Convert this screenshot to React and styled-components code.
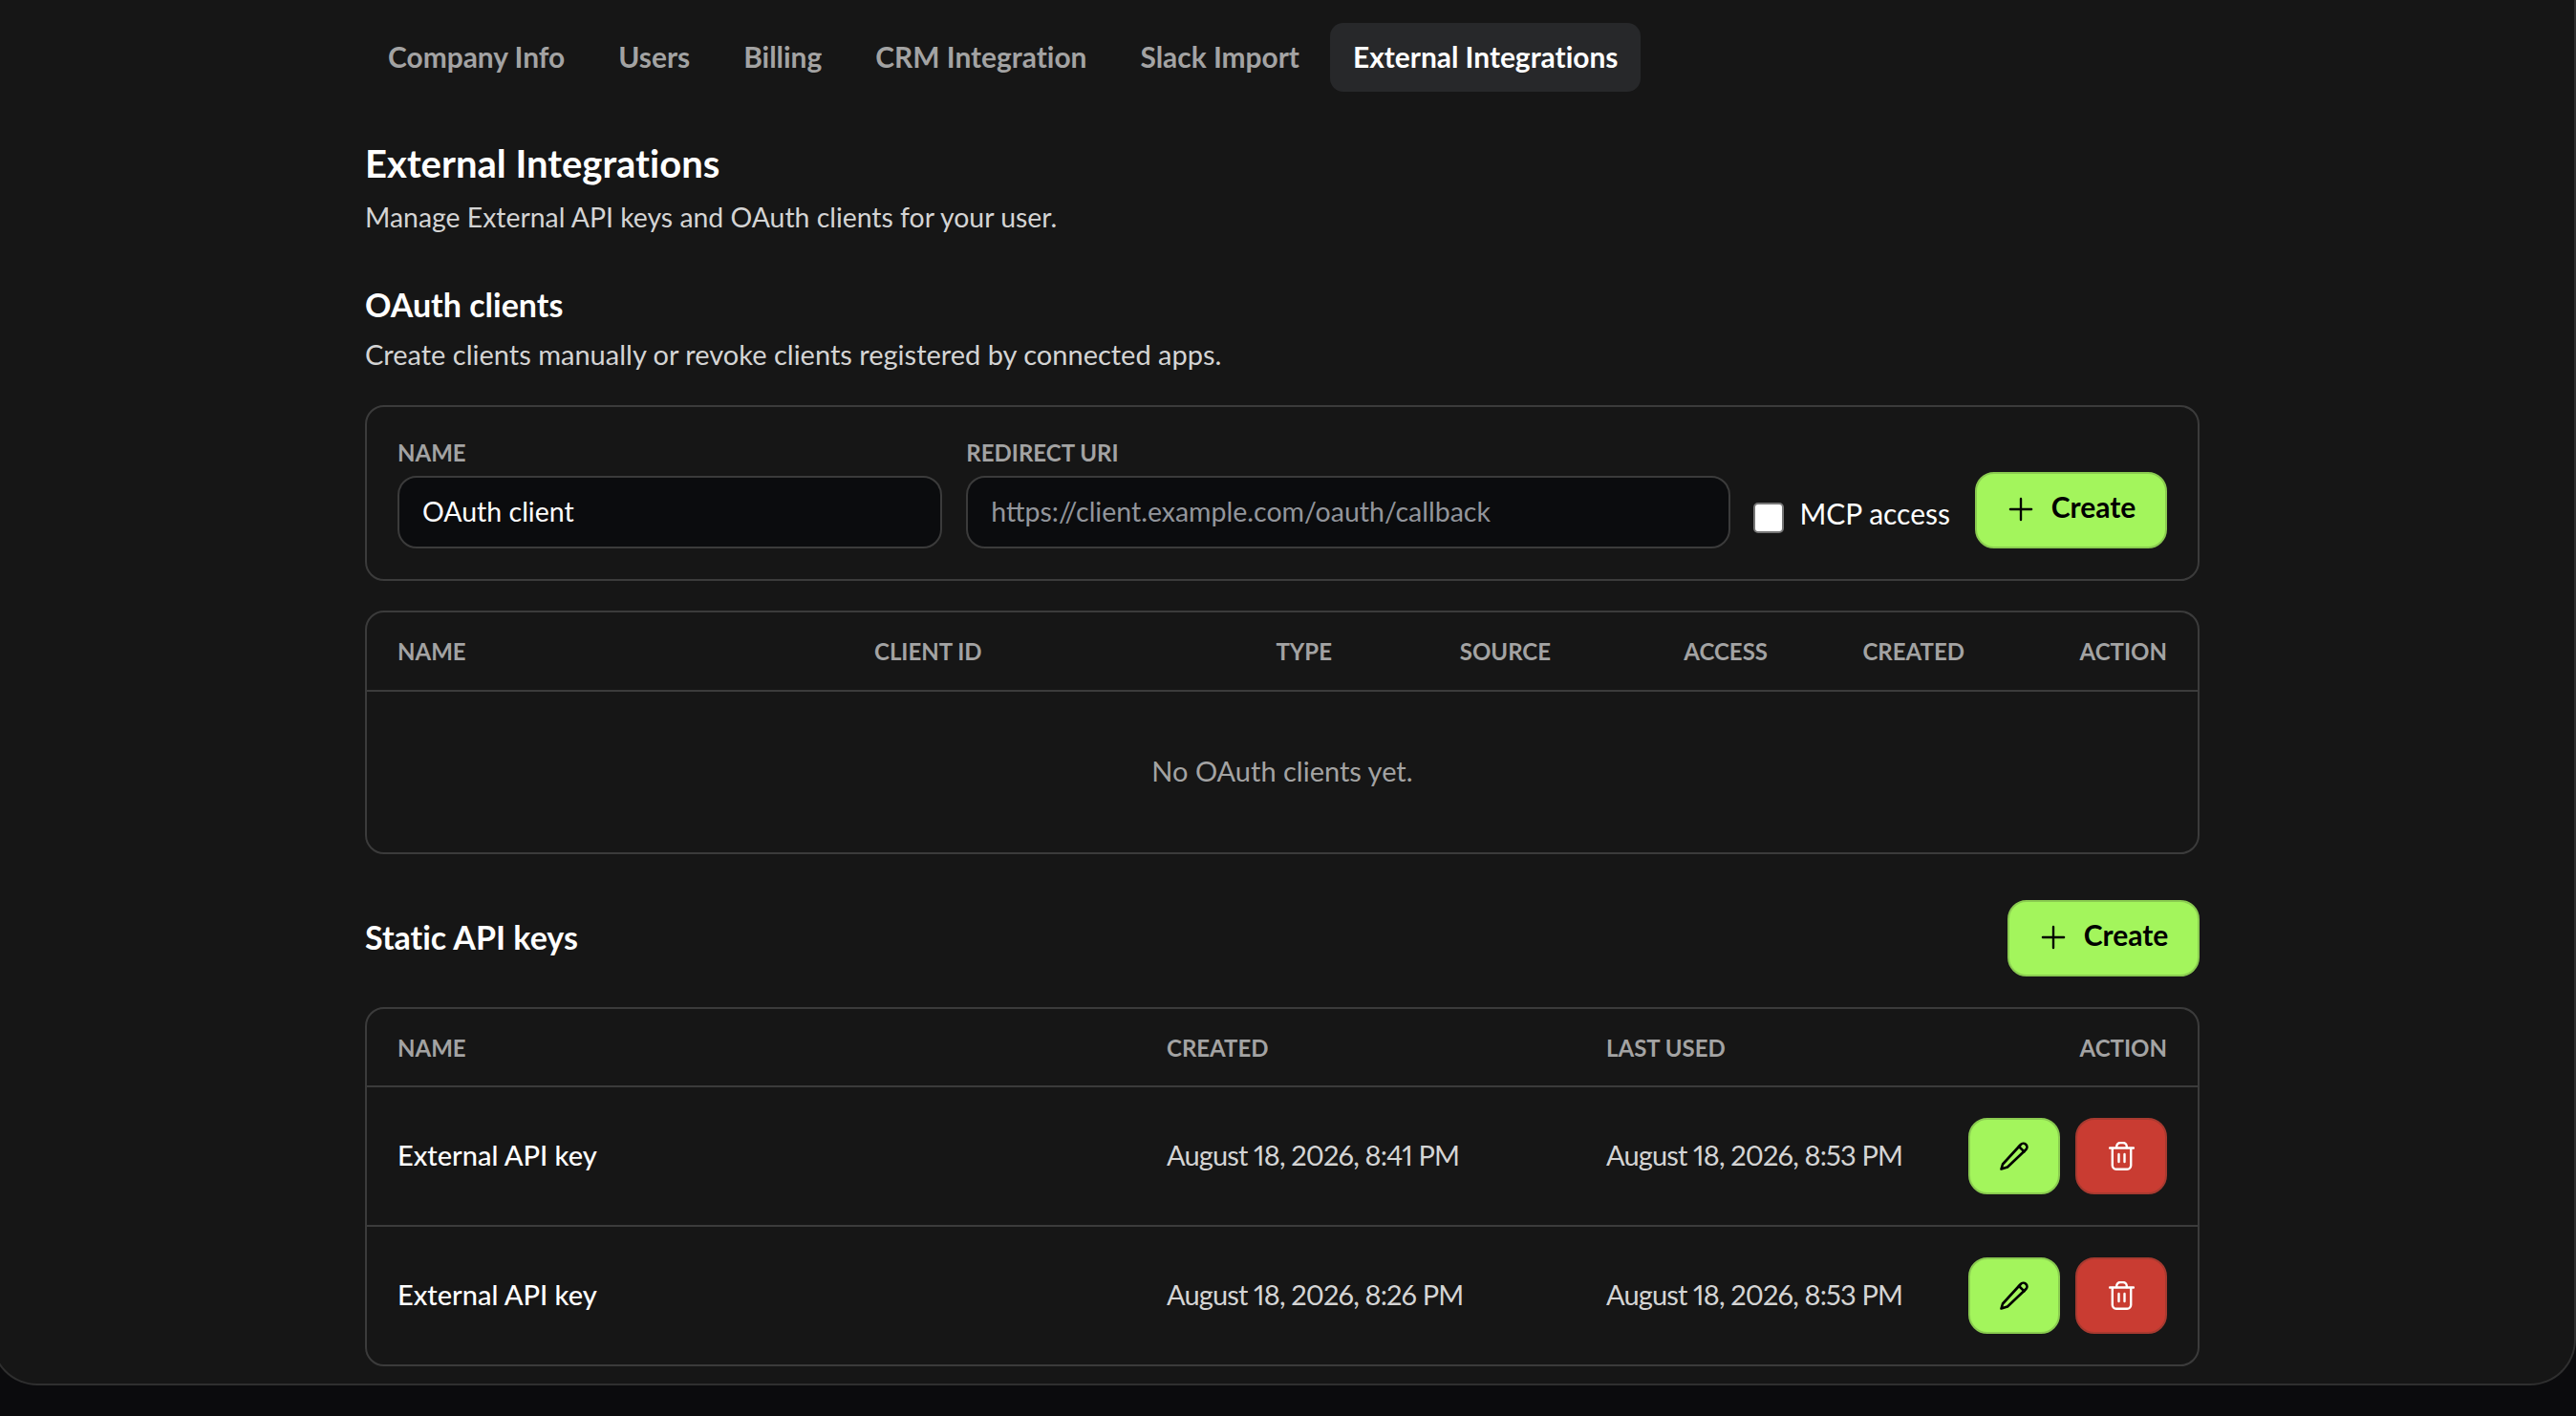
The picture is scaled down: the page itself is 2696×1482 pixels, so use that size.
import styled, { createGlobalStyle } from 'styled-components'
import { Plus } from 'lucide-react'

const GlobalStyle = createGlobalStyle`
    html, body {
        margin: 0;
        padding: 0;
        background: #0b0b0d;
        overflow: hidden;
    }
    * {
        box-sizing: border-box;
    }
`

const Page = styled.div`
    width: 2696px;
    height: 1482px;
    overflow: hidden;
    background: #0b0b0d;
    font-family: 'Lato', 'Liberation Sans', sans-serif;
    font-variant-ligatures: none;
    font-variant-numeric: proportional-nums;
    color: #ffffff;
`

const Panel = styled.main`
    width: 2705px;
    height: 1450px;
    margin-left: -9px;
    padding: 24px 0 0 389px;
    background: #161616;
    border: 2px solid #2f2f2f;
    border-top: 0;
    border-radius: 0 0 48px 48px;
`

const Content = styled.div`
    width: 1920px;
`

const Tabs = styled.nav`
    display: flex;
    gap: 8px;
`

const Tab = styled.div`
    height: 72px;
    padding: 0 24px 2px;
    display: flex;
    align-items: center;
    border-radius: 14px;
    font-size: 29.9px;
    font-weight: 700;
    color: ${(p) => (p.$active ? '#ffffff' : '#a3a3a3')};
    background: ${(p) => (p.$active ? '#27282a' : 'transparent')};
`

const Title = styled.h1`
    margin: 53px 0 0;
    font-size: 40px;
    line-height: 44px;
    font-weight: 700;
`

const SectionTitle = styled.h2`
    margin: 52px 0 0;
    font-size: 34px;
    line-height: 40px;
    font-weight: 700;
`

const Subtitle = styled.p`
    margin: ${(p) => p.$top}px 0 0;
    font-size: ${(p) => p.$size}px;
    line-height: 40px;
    color: #d4d4d4;
`

const Card = styled.div`
    border: 2px solid #3b3b3b;
    border-radius: 20px;
`

const FormCard = styled(Card)`
    height: 184px;
    margin-top: 33px;
    padding: 0 32px 32px;
    display: flex;
    align-items: flex-end;
`

const Field = styled.label`
    width: ${(p) => p.$width}px;
    margin-right: ${(p) => p.$gap}px;
    display: flex;
    flex-direction: column;
    gap: 8px;
`

const FieldLabel = styled.span`
    font-size: 24px;
    line-height: 32px;
    font-weight: 700;
    color: #a3a3a3;
`

const TextInput = styled.input`
    width: 100%;
    height: 76px;
    padding: 0 24px 3px;
    background: #0b0c0e;
    border: 2px solid #3b3b3b;
    border-radius: 20px;
    font-family: inherit;
    font-size: 28.5px;
    color: #ffffff;
    outline: none;

    &::placeholder {
        color: #92959b;
        opacity: 1;
    }
`

const CheckLabel = styled.label`
    display: flex;
    align-items: center;
    gap: 16px;
    height: 32px;
    margin: 0 26px 16px 0;
    font-size: 30px;
    line-height: 26px;
    white-space: nowrap;
`

const CheckText = styled.span`
    margin-bottom: 10px;
`

const CheckBox = styled.input`
    appearance: none;
    width: 32px;
    height: 32px;
    margin: 0;
    background: #ffffff;
    border: 2px solid #767676;
    border-radius: 5px;
`

const Button = styled.button`
    height: 80px;
    width: ${(p) => (p.$icon ? 96 : 201)}px;
    padding: ${(p) => (p.$icon ? '0' : '0 4px 2px 0')};
    display: flex;
    align-items: center;
    justify-content: center;
    gap: 13px;
    flex-shrink: 0;
    font-family: inherit;
    font-size: 30px;
    font-weight: 700;
    border-radius: 20px;
    color: ${(p) => (p.$danger ? '#ffffff' : '#000000')};
    background: ${(p) => (p.$danger ? '#c93c32' : '#a3f55c')};
    border: 2px solid ${(p) => (p.$danger ? '#a83a30' : '#8acb50')};
`

const ButtonLabel = styled.span`
    margin-bottom: 6px;
`

const TableCard = styled(Card)`
    margin-top: ${(p) => p.$top}px;
`

const TableRow = styled.div`
    display: grid;
    grid-template-columns: ${(p) => p.$columns};
    align-items: center;
    padding: 0 32px;
    height: ${(p) => p.$height}px;
    border-top: ${(p) => (p.$first ? '0' : '2px solid #3b3b3b')};
`

const HeadCell = styled.div`
    font-size: 24px;
    font-weight: 700;
    white-space: nowrap;
    color: #a3a3a3;
    text-align: ${(p) => (p.$right ? 'right' : 'left')};
`

const Empty = styled.div`
    height: 170px;
    padding-bottom: 4px;
    border-top: 2px solid #3b3b3b;
    display: flex;
    align-items: center;
    justify-content: center;
    font-size: 29px;
    color: #a3a3a3;
`

const SectionRow = styled.div`
    margin-top: 48px;
    display: flex;
    align-items: center;
    justify-content: space-between;
`

const SectionName = styled.h2`
    margin: 0 0 3px;
    font-size: 34px;
    font-weight: 700;
`

const NameCell = styled.div`
    padding-bottom: 3px;
    font-size: 29px;
    font-weight: 500;
    color: #ffffff;
`

const DateCell = styled.div`
    padding-bottom: 3px;
    font-size: 29px;
    letter-spacing: -0.85px;
    color: #d4d4d4;
`

const Actions = styled.div`
    display: flex;
    justify-content: flex-end;
    gap: 16px;
`

function PencilIcon() {
    return (
        <svg width="30" height="30" viewBox="0 0 30 30" fill="none" stroke="#000" strokeWidth="2.6" strokeLinejoin="round" strokeLinecap="round">
            <path d="M1.5 28.5 L3 23.5 L21.8 3 A3.7 3.7 0 0 1 27.5 8 L8 26.5 Z" />
            <path d="M20 5 L25.5 10.4" />
        </svg>
    )
}

function TrashIcon() {
    return (
        <svg width="27" height="30" viewBox="0 0 27 30" fill="none" stroke="#fff" strokeWidth="2.4" strokeLinecap="round">
            <path d="M1 6.5 H26" />
            <path d="M3.8 7 V24.5 A4 4 0 0 0 7.8 28.8 H19.2 A4 4 0 0 0 23.2 24.5 V7" />
            <path d="M8.2 6 V5 A4 4 0 0 1 12.2 1 H14.8 A4 4 0 0 1 18.8 5 V6" />
            <path d="M10.5 13 V21" />
            <path d="M16.5 13 V21" />
        </svg>
    )
}

const tabs = ['Company Info', 'Users', 'Billing', 'CRM Integration', 'Slack Import', 'External Integrations']

const clientColumns = '499px 240px 239px 229px 227px 206px 212px'
const keyColumns = '805px 460px 1fr 220px'

const apiKeys = [
    { name: 'External API key', created: 'August 18, 2026, 8:41 PM', used: 'August 18, 2026, 8:53 PM' },
    { name: 'External API key', created: 'August 18, 2026, 8:26 PM', used: 'August 18, 2026, 8:53 PM' },
]

function CreateButton() {
    return (
        <Button>
            <Plus size={38} strokeWidth={1.5} />
            <ButtonLabel>Create</ButtonLabel>
        </Button>
    )
}

function App() {
    return (
        <Page>
            <GlobalStyle />
            <Panel>
                <Content>
                    <Tabs>
                        {tabs.map((tab) => (
                            <Tab key={tab} $active={tab === 'External Integrations'}>
                                {tab}
                            </Tab>
                        ))}
                    </Tabs>

                    <Title>External Integrations</Title>
                    <Subtitle $top={14} $size={28.4}>
                        Manage External API keys and OAuth clients for your user.
                    </Subtitle>

                    <SectionTitle>OAuth clients</SectionTitle>
                    <Subtitle $top={12} $size={29}>
                        Create clients manually or revoke clients registered by connected apps.
                    </Subtitle>

                    <FormCard>
                        <Field $width={571} $gap={25}>
                            <FieldLabel>NAME</FieldLabel>
                            <TextInput defaultValue="OAuth client" />
                        </Field>
                        <Field $width={801} $gap={24}>
                            <FieldLabel>REDIRECT URI</FieldLabel>
                            <TextInput placeholder="https://client.example.com/oauth/callback" />
                        </Field>
                        <CheckLabel>
                            <CheckBox type="checkbox" />
                            <CheckText>MCP access</CheckText>
                        </CheckLabel>
                        <CreateButton />
                    </FormCard>

                    <TableCard $top={31}>
                        <TableRow $columns={clientColumns} $height={81} $first>
                            <HeadCell>NAME</HeadCell>
                            <HeadCell>CLIENT ID</HeadCell>
                            <HeadCell $right>TYPE</HeadCell>
                            <HeadCell $right>SOURCE</HeadCell>
                            <HeadCell $right>ACCESS</HeadCell>
                            <HeadCell $right>CREATED</HeadCell>
                            <HeadCell $right>ACTION</HeadCell>
                        </TableRow>
                        <Empty>No OAuth clients yet.</Empty>
                    </TableCard>

                    <SectionRow>
                        <SectionName>Static API keys</SectionName>
                        <CreateButton />
                    </SectionRow>

                    <TableCard $top={32}>
                        <TableRow $columns={keyColumns} $height={80} $first>
                            <HeadCell>NAME</HeadCell>
                            <HeadCell>CREATED</HeadCell>
                            <HeadCell>LAST USED</HeadCell>
                            <HeadCell $right>ACTION</HeadCell>
                        </TableRow>
                        {apiKeys.map((key) => (
                            <TableRow key={key.created} $columns={keyColumns} $height={146}>
                                <NameCell>{key.name}</NameCell>
                                <DateCell>{key.created}</DateCell>
                                <DateCell>{key.used}</DateCell>
                                <Actions>
                                    <Button $icon>
                                        <PencilIcon />
                                    </Button>
                                    <Button $icon $danger>
                                        <TrashIcon />
                                    </Button>
                                </Actions>
                            </TableRow>
                        ))}
                    </TableCard>
                </Content>
            </Panel>
        </Page>
    )
}

export default App
